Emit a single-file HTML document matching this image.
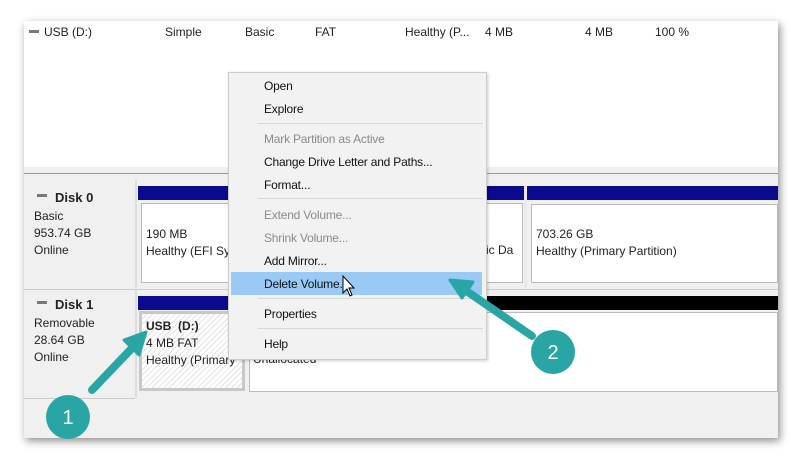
<!DOCTYPE html>
<html><head><style>
body{margin:0;width:800px;height:464px;background:#fff;position:relative;overflow:hidden;font-family:"Liberation Sans",sans-serif;font-size:12px;color:#222}
.a{position:absolute}
.t{position:absolute;white-space:nowrap}
.mi{position:absolute;left:264px;white-space:nowrap;font-size:12px;color:#111;letter-spacing:-0.2px}
.g{color:#8a8a8a}
.sep{position:absolute;left:258px;width:225px;height:1px;background:#d8d8d8}
</style></head><body>
<div class="a" style="left:24px;top:21px;width:754px;height:417px;background:#fff;box-shadow:2px 3px 8px rgba(0,0,0,.45)"></div>
<div class="a" style="left:29px;top:30px;width:10px;height:3px;background:#777"></div>
<div class="t" style="left:44px;top:25px">USB (D:)</div>
<div class="t" style="left:165px;top:25px">Simple</div>
<div class="t" style="left:245px;top:25px">Basic</div>
<div class="t" style="left:315px;top:25px">FAT</div>
<div class="t" style="left:405px;top:25px">Healthy (P...</div>
<div class="t" style="left:485px;top:25px">4 MB</div>
<div class="t" style="left:585px;top:25px">4 MB</div>
<div class="t" style="left:655px;top:25px">100 %</div>
<div class="a" style="left:24px;top:167px;width:754px;height:6px;background:#f0f0f0;border-bottom:1px solid #999"></div>
<div class="a" style="left:24px;top:174px;width:754px;height:264px;background:#f0f0f0"></div>
<div class="a" style="left:24px;top:180px;width:111px;height:108px;background:#f0f0f0;border-right:2px solid #ddd"></div>
<div class="a" style="left:37px;top:194px;width:10px;height:3px;background:#777"></div>
<div class="t" style="left:55px;top:190px;font-weight:bold;font-size:13px">Disk 0</div>
<div class="t" style="left:34px;top:208px;line-height:17px">Basic<br>953.74 GB<br>Online</div>
<div class="a" style="left:138px;top:186px;width:640px;height:14px;background:#0a0a8c"></div>
<div class="a" style="left:524px;top:186px;width:3px;height:102px;background:#eaeaea"></div>
<div class="a" style="left:141px;top:203px;width:380px;height:78px;background:#fff;border:1px solid #bbb"></div>
<div class="a" style="left:531px;top:204px;width:245px;height:77px;background:#fff;border:1px solid #bbb"></div>
<div class="t" style="left:146px;top:226px;line-height:17px">190 MB<br>Healthy (EFI Sys</div>
<div class="t" style="left:480px;top:243px">sic Da</div>
<div class="t" style="left:536px;top:226px;line-height:17px">703.26 GB<br>Healthy (Primary Partition)</div>
<div class="a" style="left:24px;top:289px;width:754px;height:1px;background:#ccc"></div>
<div class="a" style="left:37px;top:301px;width:10px;height:3px;background:#777"></div>
<div class="t" style="left:55px;top:297px;font-weight:bold;font-size:13px">Disk 1</div>
<div class="t" style="left:34px;top:315px;line-height:17px">Removable<br>28.64 GB<br>Online</div>
<div class="a" style="left:24px;top:398px;width:111px;height:1px;background:#ccc"></div>
<div class="a" style="left:135px;top:290px;width:2px;height:108px;background:#ddd"></div>
<div class="a" style="left:138px;top:296px;width:640px;height:14px;background:#000"></div>
<div class="a" style="left:138px;top:296px;width:108px;height:14px;background:#0a0a8c"></div>
<div class="a" style="left:139px;top:311px;width:100px;height:74px;border:3px solid #c8c8c8;background:repeating-linear-gradient(135deg,#fff 0 3px,#e4e4e4 3px 4px)"></div>
<div class="a" style="left:249px;top:312px;width:527px;height:78px;background:#fff;border:1px solid #bbb"></div>
<div class="t" style="left:146px;top:319px;font-weight:bold">USB&nbsp; (D:)</div>
<div class="t" style="left:146px;top:335px;line-height:17px">4 MB FAT<br>Healthy (Primary</div>
<div class="t" style="left:253px;top:352px">Unallocated</div>
<div class="a" style="left:228px;top:72px;width:257px;height:286px;background:#f2f2f2;border:1px solid #ccc;box-shadow:1px 1px 3px rgba(0,0,0,.2)"></div>
<div class="a" style="left:231px;top:272px;width:251px;height:23px;background:#99c9f5"></div>
<div class="mi" style="top:79px">Open</div>
<div class="mi" style="top:102px">Explore</div>
<div class="sep" style="top:123px"></div>
<div class="mi g" style="top:132px">Mark Partition as Active</div>
<div class="mi" style="top:155px">Change Drive Letter and Paths...</div>
<div class="mi" style="top:178px">Format...</div>
<div class="sep" style="top:198px"></div>
<div class="mi g" style="top:208px">Extend Volume...</div>
<div class="mi g" style="top:231px">Shrink Volume...</div>
<div class="mi" style="top:254px">Add Mirror...</div>
<div class="mi" style="top:277px">Delete Volume...</div>
<div class="sep" style="top:298px"></div>
<div class="mi" style="top:307px">Properties</div>
<div class="sep" style="top:328px"></div>
<div class="mi" style="top:337px">Help</div>
<svg class="a" style="left:0;top:0" width="800" height="464">
<path d="M343 276 L343 293 L347 289 L350 296 L352 295 L349 288 L354 288 Z" fill="#fff" stroke="#000" stroke-width="1"/>
<g fill="#2aa5a5" stroke="#2aa5a5">
<line x1="92" y1="390" x2="135" y2="345" stroke-width="8" stroke-linecap="round"/>
<path d="M146 332 L124 340 L139 355 Z" stroke-linejoin="round" stroke-width="3"/>
<line x1="532" y1="336" x2="465" y2="290" stroke-width="8" stroke-linecap="round"/>
<path d="M450 280 L473 282 L462 298 Z" stroke-linejoin="round" stroke-width="3"/>
<circle cx="68" cy="417" r="22" stroke="none"/>
<circle cx="553" cy="352" r="22" stroke="none"/>
</g>
<text x="68" y="424" fill="#fff" font-size="20" text-anchor="middle" font-family="Liberation Sans">1</text>
<text x="553" y="359" fill="#fff" font-size="20" text-anchor="middle" font-family="Liberation Sans">2</text>
</svg>
</body></html>
